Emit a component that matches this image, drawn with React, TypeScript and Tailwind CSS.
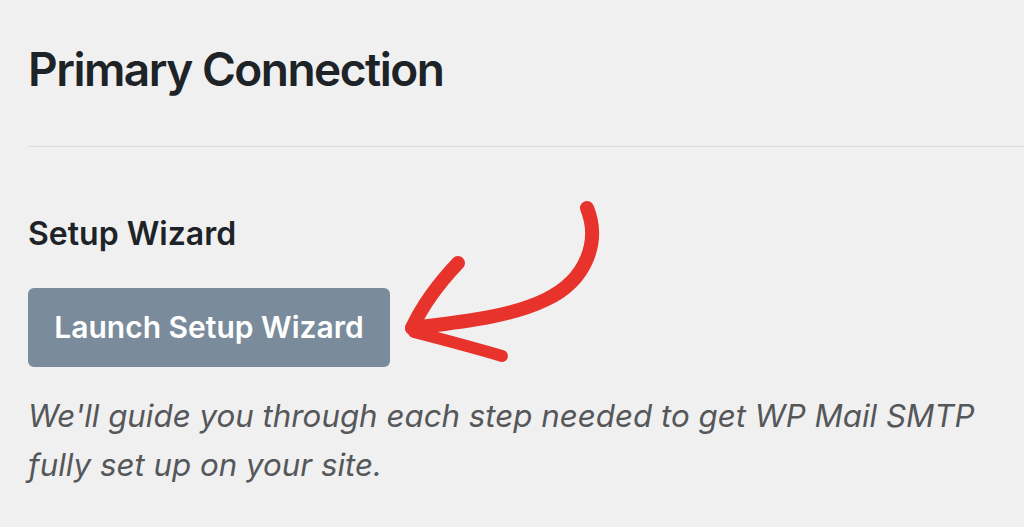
export default function App() {
  return (
    <div
      className="relative w-[1024px] h-[527px] overflow-hidden bg-[#f0f0f1] text-[#1d2327]"
      style={{ fontFamily: 'Inter, "Noto Sans", sans-serif' }}
    >
      {/* Header */}
      <div className="ml-[28px] pt-[41px] pb-[49px] border-b border-[#dcdcde]">
        <h1 className="text-[46px] leading-[56px] font-semibold tracking-[-1.5px]">Primary Connection</h1>
      </div>

      {/* Setup Wizard */}
      <div className="pl-[28px] pt-[67px]">
        <h2 className="text-[32px] leading-[40px] font-semibold">Setup Wizard</h2>
        <button className="mt-[34px] w-[362px] h-[79px] rounded-[6px] bg-[#7a8c9b] text-white text-[30px] font-semibold">
          Launch Setup Wizard
        </button>
        <p className="mt-[25px] text-[31.3px] leading-[49px] italic text-[#555759] w-[960px]">
          We'll guide you through each step needed to get WP Mail SMTP fully set up on your site.
        </p>
      </div>

      {/* Arrow annotation */}
      <svg
        className="absolute left-0 top-0"
        width="1024"
        height="527"
        viewBox="0 0 1024 527"
        fill="none"
      >
        <path
          d="M587 208 C600 240 588 280 545 300 C510 317 460 322 412 328"
          stroke="#e7332b"
          strokeWidth="14"
          strokeLinecap="round"
        />
        <path
          d="M458 263 C440 282 424 302 412 328"
          stroke="#e7332b"
          strokeWidth="14"
          strokeLinecap="round"
        />
        <path
          d="M414 332 C445 340 475 348 502 356"
          stroke="#e7332b"
          strokeWidth="12"
          strokeLinecap="round"
        />
      </svg>
    </div>
  );
}
